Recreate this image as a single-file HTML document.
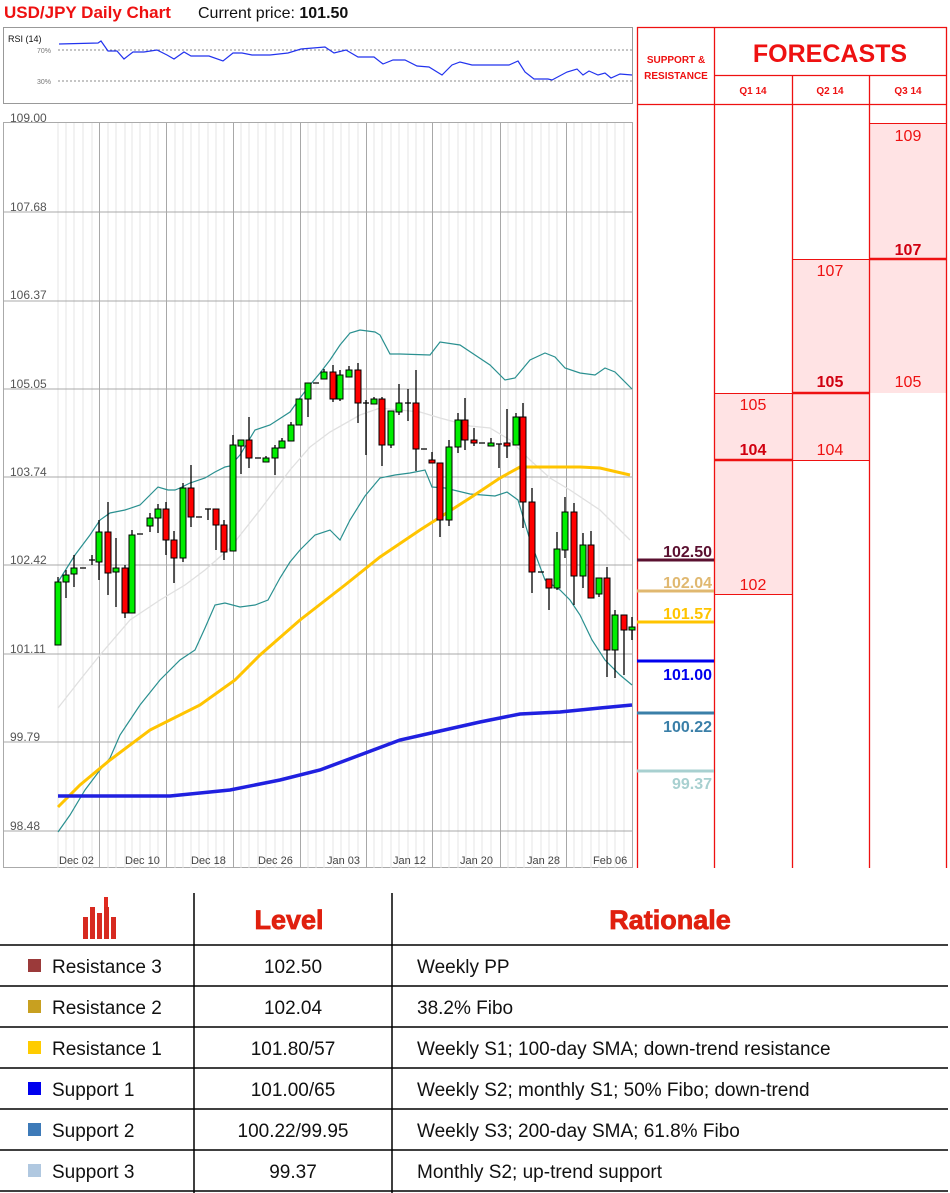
<!DOCTYPE html>
<html><head><meta charset="utf-8"><style>
body{margin:0;width:950px;height:1193px;background:#fff;overflow:hidden;font-family:"Liberation Sans",sans-serif;position:relative}
.a{position:absolute}
</style></head><body>
<svg class="a" style="left:0;top:0" width="950" height="880" font-family="Liberation Sans, sans-serif">
<text x="4" y="18" fill="#ee1111" font-weight="bold" font-size="17">USD/JPY Daily Chart</text>
<text x="198" y="18" fill="#111" font-size="16">Current price: <tspan font-weight="bold">101.50</tspan></text>
<!-- RSI -->
<rect x="3.5" y="27.5" width="629" height="76" fill="#fff" stroke="#999"/>
<text x="8" y="42" font-size="9" fill="#111">RSI (14)</text>
<text x="37" y="53" font-size="7" fill="#777">70%</text>
<text x="37" y="84" font-size="7" fill="#777">30%</text>
<path d="M58 50H632M58 81H632" stroke="#666" stroke-dasharray="2,2" stroke-width="0.8"/>
<polyline fill="none" stroke="#2233ee" stroke-width="1.2" points="59,44 98,43 101,41 108,51 117,51 124,59 133,52 144,52 157,50 167,55 174,59 184,52 191,56 209,56 223,61 233,53 242,53 252,55 270,55 288,53 301,49 325,47 334,53 346,50 358,57 374,57 383,64 393,60 405,60 417,66 429,67 442,75 452,65 460,62 472,65 509,65 518,61 525,72 534,79 548,79 552,80 567,72 577,69 583,75 589,71 598,75 605,73 611,78 620,74 632,75"/>
<!-- chart frame -->
<rect x="3.5" y="122.5" width="629" height="745" fill="#fff" stroke="#aaa"/>
<g stroke="#e4e4e4" stroke-width="1">
<path d="M58 123V868M66 123V868M74 123V868M83 123V868M92 123V868M108 123V868M116 123V868M125 123V868M132 123V868M140 123V868M150 123V868M158 123V868M175 123V868M183 123V868M191 123V868M199 123V868M208 123V868M216 123V868M224 123V868M241 123V868M249 123V868M258 123V868M266 123V868M275 123V868M283 123V868M291 123V868M308 123V868M316 123V868M324 123V868M333 123V868M341 123V868M349 123V868M358 123V868M374 123V868M382 123V868M391 123V868M399 123V868M408 123V868M416 123V868M424 123V868M441 123V868M449 123V868M458 123V868M466 123V868M474 123V868M482 123V868M491 123V868M508 123V868M516 123V868M524 123V868M532 123V868M541 123V868M549 123V868M557 123V868M574 123V868M582 123V868M591 123V868M599 123V868M607 123V868M615 123V868M624 123V868"/>
</g>
<g stroke="#a8a8a8" stroke-width="1">
<path d="M3 212H632M3 301H632M3 389H632M3 477H632M3 565H632M3 654H632M3 742H632M3 831H632"/>
<path d="M99.5 123V868M166.5 123V868M233.5 123V868M300.5 123V868M366.5 123V868M432.5 123V868M500.5 123V868M566.5 123V868"/>
</g>
<g font-size="12" fill="#555">
<text x="10" y="122">109.00</text><text x="10" y="211">107.68</text><text x="10" y="299">106.37</text><text x="10" y="388">105.05</text><text x="10" y="476">103.74</text><text x="10" y="564">102.42</text><text x="10" y="653">101.11</text><text x="10" y="741">99.79</text><text x="10" y="830">98.48</text>
</g>
<g font-size="11" fill="#444">
<text x="59" y="864">Dec 02</text><text x="125" y="864">Dec 10</text><text x="191" y="864">Dec 18</text><text x="258" y="864">Dec 26</text><text x="327" y="864">Jan 03</text><text x="393" y="864">Jan 12</text><text x="460" y="864">Jan 20</text><text x="527" y="864">Jan 28</text><text x="593" y="864">Feb 06</text>
</g>
<!-- indicators -->
<polyline fill="none" stroke="#e0e0e0" stroke-width="1.3" points="58,708 80,680 100,655 130,620 160,600 185,585 205,570 230,548 260,510 290,470 310,447 330,432 360,415 380,408 400,410 420,412 440,418 470,426 490,428 510,440 530,460 550,478 570,490 600,510 630,540"/>
<polyline fill="none" stroke="#2a9090" stroke-width="1.2" points="58,582 75,555 90,535 100,520 110,513 125,510 140,505 158,487 168,490 175,490 180,488 190,483 205,478 215,472 225,467 230,466 240,455 255,430 270,425 290,412 300,398 310,385 320,373 330,360 340,345 350,333 360,330 375,332 380,335 390,354 400,354 430,355 440,342 460,345 475,355 490,365 505,380 515,378 530,360 545,353 555,357 565,368 580,373 595,375 605,368 615,372 632,389"/>
<polyline fill="none" stroke="#2a9090" stroke-width="1.2" points="58,832 70,815 85,790 100,770 110,758 120,735 140,705 160,680 180,660 195,650 205,628 215,605 225,603 240,607 255,605 268,600 280,578 290,562 300,550 315,535 330,530 340,540 350,520 365,496 380,478 395,475 410,473 425,470 432,487 445,488 470,494 495,496 507,492 518,500 530,540 545,580 560,590 570,600 580,615 592,640 605,660 620,675 632,685"/>
<polyline fill="none" stroke="#ffc400" stroke-width="3" points="58,807 80,785 110,760 150,730 200,705 235,680 260,655 300,620 345,585 380,557 420,530 470,498 500,478 520,467 540,467 580,467 600,468 630,475"/>
<polyline fill="none" stroke="#2020e0" stroke-width="3.5" points="58,796 170,796 230,790 280,780 320,770 360,755 400,740 440,731 480,722 520,714 560,712 600,708 632,705"/>
<!-- wicks -->
<path fill="none" stroke="#000" stroke-width="1.3" d="M58 577V645M66 570V598M74 555V587M92 555V565M99 520V580M108 502V595M116 538V607M125 565V618M132 530V613M150 513V532M158 504V533M166 502V555M174 531V583M183 483V562M191 465V527M208 509V520M216 509V550M224 520V560M233 435V551M241 440V474M249 417V468M266 456V462M275 445V475M282 438V448M291 422V441M299 399V425M308 383V417M324 369V379M333 365V402M340 370V401M349 366V377M358 363V423M366 400V455M374 397V404M382 397V466M391 411V448M399 384V415M408 389V421M416 370V471M432 452V463M440 463V537M449 440V526M458 413V453M465 398V450M474 428V446M491 438V446M499 444V468M507 409V458M516 413V445M523 403V528M532 488V593M549 579V610M557 532V590M565 497V558M574 503V605M583 533V588M591 531V598M599 578V597M607 567V677M615 610V678M624 615V675M632 617V640M80 568h6M89 560h6M137 534h6M196 517h6M205 509h6M255 458h6M313 383h6M363 403h6M405 403h6M421 449h6M479 443h6M496 444h6M538 572h6"/>
<g stroke="#000" stroke-width="1" fill="#00ee00">
<rect x="55" y="582" width="6" height="63"/><rect x="63" y="575" width="6" height="7"/><rect x="71" y="568" width="6" height="6"/><rect x="96" y="532" width="6" height="30"/><rect x="113" y="568" width="6" height="4"/><rect x="129" y="535" width="6" height="78"/><rect x="147" y="518" width="6" height="8"/><rect x="155" y="509" width="6" height="9"/><rect x="180" y="488" width="6" height="70"/><rect x="230" y="445" width="6" height="106"/><rect x="238" y="440" width="6" height="6"/><rect x="263" y="458" width="6" height="4"/><rect x="272" y="448" width="6" height="10"/><rect x="279" y="441" width="6" height="7"/><rect x="288" y="425" width="6" height="16"/><rect x="296" y="399" width="6" height="26"/><rect x="305" y="383" width="6" height="16"/><rect x="321" y="372" width="6" height="7"/><rect x="337" y="375" width="6" height="24"/><rect x="346" y="370" width="6" height="7"/><rect x="371" y="399" width="6" height="5"/><rect x="388" y="411" width="6" height="34"/><rect x="396" y="403" width="6" height="9"/><rect x="446" y="447" width="6" height="73"/><rect x="455" y="420" width="6" height="27"/><rect x="488" y="443" width="6" height="3"/><rect x="513" y="417" width="6" height="28"/><rect x="554" y="549" width="6" height="39"/><rect x="562" y="512" width="6" height="38"/><rect x="580" y="545" width="6" height="31"/><rect x="596" y="578" width="6" height="16"/><rect x="612" y="615" width="6" height="35"/><rect x="629" y="627" width="6" height="3"/>
</g>
<g stroke="#000" stroke-width="1" fill="#ff0000">
<rect x="105" y="532" width="6" height="41"/><rect x="122" y="568" width="6" height="45"/><rect x="163" y="509" width="6" height="31"/><rect x="171" y="540" width="6" height="18"/><rect x="188" y="488" width="6" height="29"/><rect x="213" y="509" width="6" height="16"/><rect x="221" y="525" width="6" height="27"/><rect x="246" y="440" width="6" height="18"/><rect x="330" y="372" width="6" height="27"/><rect x="355" y="370" width="6" height="33"/><rect x="379" y="399" width="6" height="46"/><rect x="413" y="403" width="6" height="46"/><rect x="429" y="460" width="6" height="3"/><rect x="437" y="463" width="6" height="57"/><rect x="462" y="420" width="6" height="20"/><rect x="471" y="440" width="6" height="3"/><rect x="504" y="443" width="6" height="3"/><rect x="520" y="417" width="6" height="85"/><rect x="529" y="502" width="6" height="70"/><rect x="546" y="579" width="6" height="9"/><rect x="571" y="512" width="6" height="64"/><rect x="588" y="545" width="6" height="53"/><rect x="604" y="578" width="6" height="72"/><rect x="621" y="615" width="6" height="15"/>
</g>
<!-- forecast area -->
<rect x="869" y="123" width="77" height="270" fill="#ffe3e4"/>
<rect x="792" y="259" width="77" height="201" fill="#ffe3e4"/>
<rect x="714" y="393" width="78" height="202" fill="#ffe3e4"/>
<g stroke="#ee1111">
<path d="M869 123.5H946M792 259.5H869M714 393.5H792M792 460.5H869M714 594.5H792" stroke-width="1"/>
<path d="M869 259H946M792 393H869M714 460H792" stroke-width="2.5"/>
<path d="M637.5 27V868M714.5 27V868M792.5 75V868M869.5 75V868M946.5 27V868M637 27.5H947M714 75.5H947M637 104.5H947" stroke-width="1.3"/>
</g>
<g fill="#ee1111" text-anchor="middle">
<text x="676" y="63" font-size="10" font-weight="bold">SUPPORT &amp;</text>
<text x="676" y="79" font-size="10" font-weight="bold">RESISTANCE</text>
<text x="830" y="62" font-size="25" font-weight="bold">FORECASTS</text>
<text x="753" y="94" font-size="10" font-weight="bold">Q1 14</text>
<text x="830" y="94" font-size="10" font-weight="bold">Q2 14</text>
<text x="908" y="94" font-size="10" font-weight="bold">Q3 14</text>
<g font-size="16">
<text x="908" y="141">109</text><text x="908" y="255" font-weight="bold" fill="#d00010">107</text><text x="908" y="387">105</text>
<text x="830" y="276">107</text><text x="830" y="387" font-weight="bold" fill="#d00010">105</text><text x="830" y="455">104</text>
<text x="753" y="410">105</text><text x="753" y="455" font-weight="bold" fill="#d00010">104</text><text x="753" y="590">102</text>
</g></g>
<g stroke-width="3">
<path d="M637 560H714" stroke="#5a1030"/><path d="M637 591H714" stroke="#e0b870"/><path d="M637 622H714" stroke="#ffc400"/><path d="M637 661H714" stroke="#0000ee"/><path d="M637 713H714" stroke="#3a7fa8"/><path d="M637 771H714" stroke="#a8d0d0"/>
</g>
<g font-size="16" font-weight="bold" text-anchor="end">
<text x="712" y="557" fill="#5a1030">102.50</text><text x="712" y="588" fill="#e0b870">102.04</text><text x="712" y="619" fill="#ffc400">101.57</text><text x="712" y="680" fill="#0000ee">101.00</text><text x="712" y="732" fill="#3a7fa8">100.22</text><text x="712" y="789" fill="#a8d0d0">99.37</text>
</g>
</svg>
<!-- bottom table -->
<svg class="a" style="left:0;top:880px" width="950" height="313" font-family="Liberation Sans, sans-serif">
<g stroke="#000" stroke-width="1.5">
<path d="M194 13V313M392 13V313"/>
<path d="M0 65H948M0 106H948M0 147H948M0 188H948M0 229H948M0 270H948M0 311H948"/>
</g>
<g fill="#d72a20"><rect x="83" y="37" width="5" height="22"/><rect x="90" y="27" width="5" height="32"/><rect x="97" y="33" width="5" height="26"/><rect x="104" y="17" width="4" height="42" fill="#e02a20"/><rect x="104" y="27" width="5" height="32"/><rect x="111" y="37" width="5" height="22"/></g>
<g fill="#e0200f" font-weight="900" font-size="27" text-anchor="middle" stroke="#e0200f" stroke-width="0.8">
<text x="289" y="49">Level</text><text x="670" y="49">Rationale</text>
</g>
<g font-size="19" fill="#111">
<rect x="28" y="79" width="13" height="13" fill="#9b3a3a"/><rect x="28" y="120" width="13" height="13" fill="#c8a020"/><rect x="28" y="161" width="13" height="13" fill="#ffcc00"/><rect x="28" y="202" width="13" height="13" fill="#0000ee"/><rect x="28" y="243" width="13" height="13" fill="#3d7ab8"/><rect x="28" y="284" width="13" height="13" fill="#b0c8e0"/>
<text x="52" y="93">Resistance 3</text><text x="52" y="134">Resistance 2</text><text x="52" y="175">Resistance 1</text><text x="52" y="216">Support 1</text><text x="52" y="257">Support 2</text><text x="52" y="298">Support 3</text>
<g text-anchor="middle"><text x="293" y="93">102.50</text><text x="293" y="134">102.04</text><text x="293" y="175">101.80/57</text><text x="293" y="216">101.00/65</text><text x="293" y="257">100.22/99.95</text><text x="293" y="298">99.37</text></g>
<text x="417" y="93">Weekly PP</text><text x="417" y="134">38.2% Fibo</text><text x="417" y="175">Weekly S1; 100-day SMA; down-trend resistance</text><text x="417" y="216">Weekly S2; monthly S1; 50% Fibo; down-trend</text><text x="417" y="257">Weekly S3; 200-day SMA; 61.8% Fibo</text><text x="417" y="298">Monthly S2; up-trend support</text>
</g>
</svg>
</body></html>
